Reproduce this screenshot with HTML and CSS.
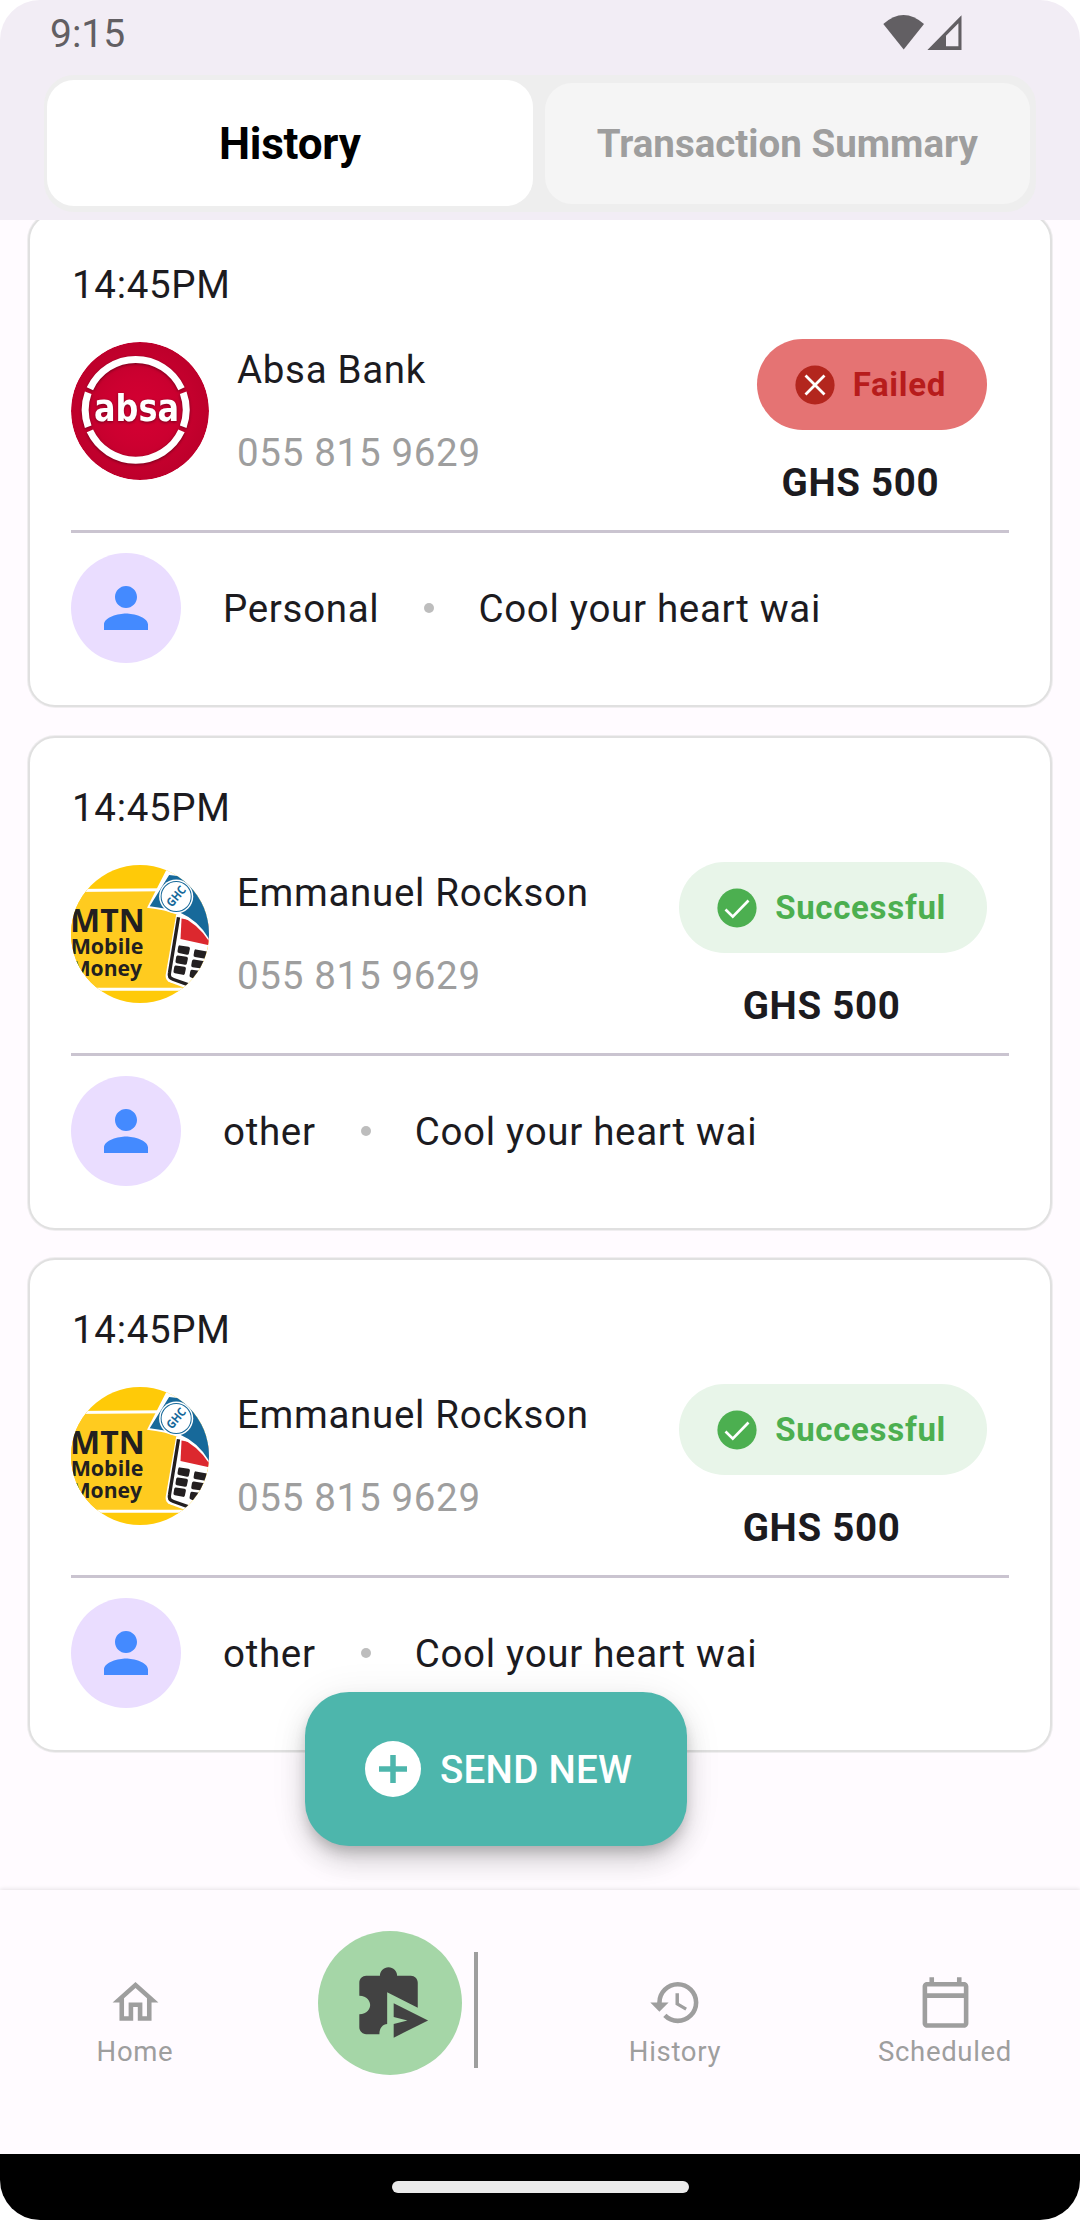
FILE: index.html
```
<!DOCTYPE html>
<html lang="en">
<head>
<meta charset="utf-8">
<title>History</title>
<link rel="stylesheet" href="styles.css">
</head>
<body>
<svg class="defs" aria-hidden="true">
  <symbol id="person" viewBox="0 0 24 24"><path d="M12 12c2.21 0 4-1.79 4-4s-1.79-4-4-4-4 1.79-4 4 1.79 4 4 4zm0 2c-2.67 0-8 1.34-8 4v2h16v-2c0-2.66-5.33-4-8-4z"/></symbol>
  <symbol id="check" viewBox="0 0 40 40"><circle cx="20" cy="20" r="19.6" fill="#4caf50"/><path d="M8.500 21.500l7.300 7.200L31.500 12.500" fill="none" stroke="#fff" stroke-width="2.700"/></symbol>
  <symbol id="cross" viewBox="0 0 40 40"><circle cx="20" cy="20" r="19.6" fill="#b3261e"/><path d="M11.500 11.500l17 17M28.500 11.500l-17 17" fill="none" stroke="#fff" stroke-width="2.800" stroke-linecap="square"/></symbol>
  <symbol id="momo" viewBox="63 74 412 412">
    <rect x="60" y="70" width="420" height="420" fill="#ffca08"/>
    <rect x="60" y="148" width="420" height="297" fill="#ffcb1f"/>
    <path d="M60 150L340 148M60 445H480" stroke="#fff" stroke-width="9" fill="none"/>
    <path d="M377 222L346 400Q343 418 358 424L412 444L480 430V220z" fill="#fff"/>
    <path d="M384 230L357 396Q354 411 367 415L412 431" fill="none" stroke="#231f20" stroke-width="10"/>
    <path d="M393 234L390 295L480 315V250z" fill="#dc282e"/>
    <g fill="#231f20">
      <path d="M388 314l26 4q5 1 4 6l-3 14q-1 5-6 4l-24-5q-5-1-4-6l2-12q1-6 5-5z"/>
      <path d="M382 344l26 4q5 1 4 6l-3 14q-1 5-6 4l-24-5q-5-1-4-6l2-12q1-6 5-5z"/>
      <path d="M376 374l26 4q5 1 4 6l-3 14q-1 5-6 4l-24-5q-5-1-4-6l2-12q1-6 5-5z"/>
      <path d="M436 326l33 6-5 22-31-5q-5-1-4-6l2-12q1-6 5-5z"/>
      <path d="M430 356l32 5-9 22-27-4q-5-1-4-6l2-12q1-6 6-5z"/>
      <path d="M424 387l22 3-10 17q-5 6-11 4l-5-2q-4-1-3-6l2-11q1-6 5-5z"/>
    </g>
    <path d="M349 86L290 202Q345 208 384 224Q440 248 474 300L490 90z" fill="#fff"/>
    <path d="M356 104L298 197Q350 203 388 216Q444 240 476 296L490 120z" fill="#17699a"/>
    <circle cx="377" cy="168" r="51" fill="#fff"/>
    <circle cx="377" cy="168" r="45" fill="none" stroke="#17699a" stroke-width="3"/>
    <text class="momo-coin" x="377" y="180" text-anchor="middle" textLength="68" lengthAdjust="spacingAndGlyphs" transform="rotate(-50 377 168)">GHC</text>
    <text class="momo-big" x="60" y="274" textLength="223" lengthAdjust="spacingAndGlyphs">MTN</text>
    <text class="momo-small" x="62" y="341" textLength="217" lengthAdjust="spacingAndGlyphs">Mobile</text>
    <text class="momo-small" x="62" y="405" textLength="213" lengthAdjust="spacingAndGlyphs">Money</text>
  </symbol>
</svg>

<div class="screen">
  <header class="header">
    <div class="status">
      <span class="clock">9:15</span>
      <svg class="signals" viewBox="0 0 80 36" aria-hidden="true">
        <path d="M.300 9Q20.500-9 41 9L20.700 34.500z"/>
        <path fill-rule="evenodd" d="M44.400 35H78.500V.300zM63 31.200V20.800L75.400 8.300V31.200z"/>
      </svg>
    </div>
    <div class="tabs">
      <div class="tab tab-active">History</div>
      <div class="tab">Transaction Summary</div>
    </div>
  </header>

  <main class="list">
    <article class="card">
      <div class="time">14:45PM</div>
      <div class="main-row">
        <svg class="logo" viewBox="0 0 138 138" role="img" aria-label="Absa">
          <defs><radialGradient id="red"><stop offset="0" stop-color="#d50032"/><stop offset=".5" stop-color="#cc0030"/><stop offset="1" stop-color="#bd002b"/></radialGradient></defs>
          <circle cx="69" cy="69" r="69" fill="url(#red)"/>
          <g class="absa-mark">
            <path d="M18.900 46.700A50.500 50.500 0 0 1 110.500 46.700M110.500 88.900A50.500 50.500 0 0 1 18.900 88.900M17.200 50.800A50.500 50.500 0 0 0 17.200 84.800M112.200 50.800A50.500 50.500 0 0 1 112.200 84.800" fill="none" stroke="#fff" stroke-width="7"/>
            <text class="absa-name" x="23" y="78.500" textLength="85" lengthAdjust="spacingAndGlyphs">absa</text>
          </g>
        </svg>
        <div class="party"><div>Absa Bank</div><div class="phone">055 815 9629</div></div>
        <div class="result">
          <div class="pill failed"><svg aria-hidden="true"><use href="#cross"/></svg>Failed</div>
          <div class="amount">GHS 500</div>
        </div>
      </div>
      <div class="note-row">
        <div class="avatar"><svg aria-hidden="true"><use href="#person"/></svg></div>
        <span>Personal</span><i class="dot"></i><span>Cool your heart wai</span>
      </div>
    </article>

    <article class="card">
      <div class="time">14:45PM</div>
      <div class="main-row">
        <svg class="logo" role="img" aria-label="MTN Mobile Money"><use href="#momo"/></svg>
        <div class="party"><div>Emmanuel Rockson</div><div class="phone">055 815 9629</div></div>
        <div class="result">
          <div class="pill"><svg aria-hidden="true"><use href="#check"/></svg>Successful</div>
          <div class="amount">GHS 500</div>
        </div>
      </div>
      <div class="note-row">
        <div class="avatar"><svg aria-hidden="true"><use href="#person"/></svg></div>
        <span>other</span><i class="dot"></i><span>Cool your heart wai</span>
      </div>
    </article>

    <article class="card card-last">
      <div class="time">14:45PM</div>
      <div class="main-row">
        <svg class="logo" role="img" aria-label="MTN Mobile Money"><use href="#momo"/></svg>
        <div class="party"><div>Emmanuel Rockson</div><div class="phone">055 815 9629</div></div>
        <div class="result">
          <div class="pill"><svg aria-hidden="true"><use href="#check"/></svg>Successful</div>
          <div class="amount">GHS 500</div>
        </div>
      </div>
      <div class="note-row">
        <div class="avatar"><svg aria-hidden="true"><use href="#person"/></svg></div>
        <span>other</span><i class="dot"></i><span>Cool your heart wai</span>
      </div>
    </article>

    <button class="fab" type="button">
      <svg viewBox="0 0 56 56" aria-hidden="true"><circle cx="28" cy="28" r="28" fill="#fff"/><path d="M28 14v28M14 28h28" stroke="#4db6ac" stroke-width="5.500"/></svg>
      SEND NEW
    </button>
  </main>

  <nav class="nav">
    <a class="nav-item">
      <svg viewBox="0 0 24 24" aria-hidden="true"><path d="M12 5.690l5 4.500V18h-2v-6H9v6H7v-7.810l5-4.500M12 3L2 12h3v8h6v-6h2v6h6v-8h3L12 3z"/></svg>
      Home
    </a>
    <a class="nav-send">
      <span class="send-disc">
        <svg viewBox="0 0 24 24" aria-hidden="true"><path d="M20 6c0-1.100-.900-2-2-2h-4c0-1.380-1.120-2.500-2.500-2.500S9 2.620 9 4H5c-1.100 0-2 .900-2 2v3.800C5.300 9.800 6.150 11.400 6.150 12.500S5.300 15.200 3 15.200V19c0 1.100.900 2 2 2h3.850C8.850 19.100 9.900 18.150 11.100 18.050V8.800L20 13.300zM13 12v4l4 1-4 1v4l10-5z"/></svg>
      </span>
      <span class="send-bar"></span>
    </a>
    <a class="nav-item">
      <svg viewBox="0 0 24 24" aria-hidden="true"><path d="M13 3a9 9 0 0 0-9 9H1l3.890 3.890.070.140L9 12H6c0-3.870 3.130-7 7-7s7 3.130 7 7-3.130 7-7 7c-1.930 0-3.680-.790-4.940-2.060l-1.420 1.420A8.954 8.954 0 0 0 13 21a9 9 0 0 0 0-18zm-1 5v5l4.280 2.540.720-1.210-3.500-2.080V8H12z"/></svg>
      History
    </a>
    <a class="nav-item">
      <svg viewBox="0 0 24 24" aria-hidden="true"><path d="M20 3h-1V1h-2v2H7V1H5v2H4c-1.100 0-2 .900-2 2v16c0 1.100.900 2 2 2h16c1.100 0 2-.900 2-2V5c0-1.100-.900-2-2-2zm0 18H4V10h16v11zm0-13H4V5h16v3z"/></svg>
      Scheduled
    </a>
  </nav>
  <footer class="gesture"><span class="handle"></span></footer>
</div>
</body>
</html>
```
FILE: styles.css
```
* { box-sizing: border-box; }
body {
  margin: 0;
  background: #fff;
  font-family: Roboto, "Liberation Sans", sans-serif;
  font-size: 38.5px;
  line-height: 45px;
  color: #1c1b1f;
}
.defs { display: none; }
.screen {
  width: 1080px;
  height: 2220px;
  display: flex;
  flex-direction: column;
  border-radius: 40px;
  overflow: hidden;
  background: #fffbff;
}

/* header */
.header { height: 220px; flex: none; background: #f2edf5; }
.status {
  height: 75px;
  padding: 12px 117px 0 50px;
  display: flex;
  justify-content: space-between;
  color: #625f63;
}
.clock { font-size: 39px; }
.signals { width: 80px; height: 36px; margin-top: 3px; fill: #625f63; }
.tabs {
  width: 992px;
  height: 137px;
  margin-left: 44px;
  padding: 5px 6px 6px 3px;
  display: flex;
  align-items: center;
  gap: 12px;
  border-radius: 30px;
  background: #eeeeee;
}
.tab {
  flex: 1;
  height: 121px;
  display: flex;
  align-items: center;
  justify-content: center;
  border-radius: 27px;
  background: #f5f5f5;
  color: #9e9e9e;
  font-weight: 700;
}
.tab-active {
  height: 126px;
  padding-top: 3px;
  background: #fff;
  color: #000;
  font-size: 44px;
  letter-spacing: -.2px;
}

/* transactions */
.list {
  flex: 1;
  position: relative;
  padding: 0 28px;
  overflow: hidden;
}
.card {
  height: 494px;
  margin-bottom: 29px;
  padding: 47px 41px 0;
  border: 2px solid #e0e0e0;
  border-radius: 27px;
  box-shadow: 0 0 0 1px #f0eef0;
  background: #fff;
  letter-spacing: .69px;
}
.card:first-child { margin-top: -7px; }
.card-last { margin-top: -1px; }
.time { padding-left: 1px; }
.main-row {
  height: 194px;
  margin-top: 32px;
  display: flex;
  align-items: flex-start;
  border-bottom: 3px solid #cac4d0;
}
.logo { width: 138px; height: 138px; margin-top: 3px; flex: none; border-radius: 50%; }
.party {
  margin: 8px 0 0 28px;
  display: flex;
  flex-direction: column;
  gap: 38px;
}
.phone { color: #9e9e9e; }
.result { margin: 0 22px 0 auto; }
.pill {
  height: 91px;
  padding: 0 41px 0 38px;
  display: flex;
  align-items: center;
  gap: 18px;
  border-radius: 46px;
  background: #e8f5e9;
  color: #4caf50;
  font-size: 33px;
  font-weight: 700;
}
.pill svg { width: 40px; height: 40px; }
.failed { background: #e57373; color: #b71c1c; }
.amount {
  margin-top: 30px;
  padding-right: 23px;
  text-align: center;
  font-weight: 700;
}
.note-row {
  height: 110px;
  margin-top: 20px;
  display: flex;
  align-items: center;
}
.avatar {
  width: 110px;
  height: 110px;
  margin-right: 42px;
  display: flex;
  align-items: center;
  justify-content: center;
  border-radius: 50%;
  background: #eaddff;
}
.avatar svg { width: 66px; height: 66px; fill: #448aff; }
.dot { width: 10px; height: 10px; margin: 0 44px 0 45px; border-radius: 50%; background: #bdbdbd; }

/* logo lettering */
.absa-mark { filter: drop-shadow(0 1px 1.500px rgba(60, 0, 15, .6)); }
.absa-name { font: 700 38px "DejaVu Sans", sans-serif; letter-spacing: 0; fill: #fff; }
.momo-big { font: 700 98px "Open Sans", sans-serif; letter-spacing: 0; fill: #231f20; }
.momo-small { font: 700 63px "Open Sans", sans-serif; letter-spacing: 0; fill: #231f20; }
.momo-coin { font: 700 36px "Open Sans", sans-serif; letter-spacing: 0; fill: #17699a; }

/* floating action */
.fab {
  position: absolute;
  left: 305px;
  top: 1472px;
  width: 382px;
  height: 154px;
  padding: 0 0 0 60px;
  display: flex;
  align-items: center;
  gap: 19px;
  border: 0;
  border-radius: 44px;
  background: #4db6ac;
  color: #fff;
  font: 500 38.5px/45px Roboto, "Liberation Sans", sans-serif;
  letter-spacing: .27px;
  box-shadow: 0 8px 14px -3px rgba(0, 0, 0, .2), 0 16px 27px rgba(0, 0, 0, .14), 0 3px 40px rgba(0, 0, 0, .07);
}
.fab svg { width: 56px; height: 56px; }

/* bottom navigation */
.nav {
  position: relative;
  height: 264px;
  flex: none;
  display: grid;
  grid-template-columns: repeat(4, 1fr);
  background: #fffbff;
  box-shadow: 0 -1px 4px rgba(0, 0, 0, .1);
}
.nav-item {
  padding-top: 85px;
  display: flex;
  flex-direction: column;
  align-items: center;
  color: #9e9e9e;
  font-size: 27.5px;
  line-height: 33px;
  letter-spacing: .69px;
}
.nav-item svg { width: 55px; height: 55px; margin-bottom: 5px; fill: #9e9e9e; }
.nav-send { padding: 41px 0 0 48px; display: flex; gap: 12px; }
.send-disc {
  width: 144px;
  height: 144px;
  display: flex;
  align-items: center;
  justify-content: center;
  border-radius: 50%;
  background: #a5d6a7;
}
.send-disc svg { width: 82.5px; height: 82.5px; fill: #424242; }
.send-bar { width: 4px; height: 116px; margin-top: 21px; background: #9e9e9e; }
.gesture {
  height: 66px;
  flex: none;
  padding-top: 27px;
  display: flex;
  justify-content: center;
  align-items: flex-start;
  background: #000;
}
.handle { width: 297px; height: 12px; border-radius: 6px; background: #eaeaea; }
```
